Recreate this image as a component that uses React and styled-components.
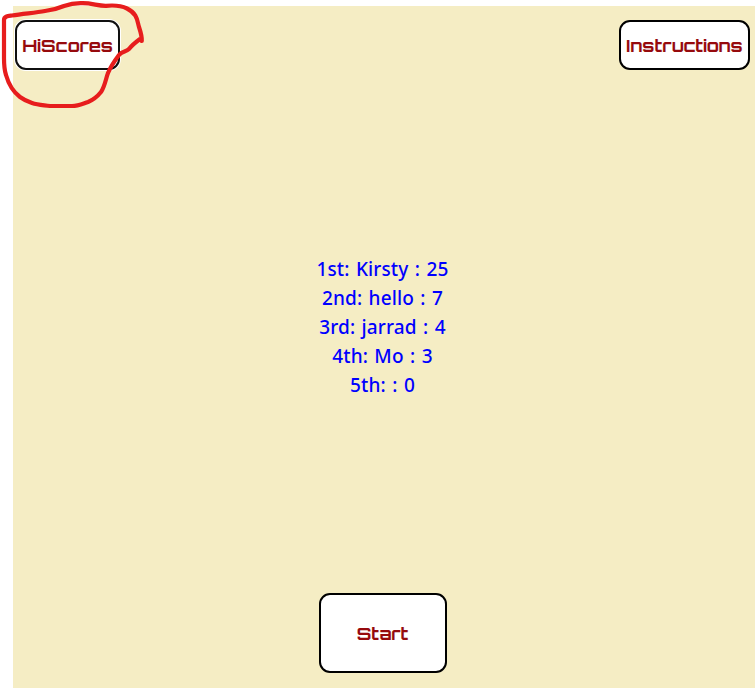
import React from "react";
import styled, { createGlobalStyle } from "styled-components";

const GlobalStyle = createGlobalStyle`
  * { box-sizing: border-box; }
  body { margin: 0; background: #fff; overflow: hidden; }
`;

const Page = styled.div`
  position: relative;
  height: 688px;
  padding: 6px 0 0 13px;
`;

const Game = styled.main`
  height: 682px;
  background: #f5edc4;
  padding: 14px 5px 15px 2px;
  display: flex;
  flex-direction: column;
  align-items: center;
`;

const TopBar = styled.header`
  align-self: stretch;
  display: flex;
  justify-content: space-between;
`;

const GameButton = styled.button`
  width: ${(p) => p.$width}px;
  height: ${(p) => p.$height}px;
  padding: 0;
  display: flex;
  align-items: center;
  justify-content: center;
  background: #fff;
  border: 2px solid ${(p) => (p.$active ? "#101010" : "#000")};
  border-radius: 11px;
  box-shadow: ${(p) => (p.$active ? "0 0 0 1px #fff" : "none")};
  color: #960a0d;
  font: 700 17.6px "Orbitron", "DejaVu Sans", sans-serif;
  -webkit-text-stroke: 0.1px #960a0d;
  white-space: nowrap;
`;

const Scores = styled.ol`
  list-style: none;
  margin: 185px 0 193px;
  padding: 0;
  text-align: center;
`;

const Score = styled.li`
  height: 29px;
  color: #0000ff;
  font: 500 19px/29px "Noto Sans", sans-serif;
  letter-spacing: 0.13px;
  word-spacing: 1.3px;
  white-space: nowrap;
`;

const Marker = styled.svg`
  position: absolute;
  left: 0;
  top: 0;
  pointer-events: none;
`;

const scores = [
  "1st: Kirsty : 25",
  "2nd: hello : 7",
  "3rd: jarrad : 4",
  "4th: Mo : 3",
  "5th: : 0",
];

export default function App() {
  return (
    <Page>
      <GlobalStyle />
      <Game>
        <TopBar>
          <GameButton $width={105} $height={50} $active>HiScores</GameButton>
          <GameButton $width={131} $height={50}>Instructions</GameButton>
        </TopBar>
        <Scores>
          {scores.map((s) => (
            <Score key={s}>{s}</Score>
          ))}
        </Scores>
        <GameButton $width={128} $height={80}>Start</GameButton>
      </Game>
      <Marker width="150" height="112" viewBox="0 0 150 112" fill="none">
        <path
          d="M119 55C113 63 111 66 108 73C106 78 105 86 101 92C97 97 93 100 88 102C82 104 78 106 72 106L50 106C43 105 38 105 32 103C26 101 24 100 20 97C12 91 8 82 6 75C4 69 4 64 4 58L4 20C4 16 8 16 12 15.500C23 13.500 35 13 45 11C53 10 57 9 64 6C71 3.500 75 3 82 3.200C92 3 98 6 106 5.800C114 5 122 6 127 8.500C138 14 137 21 139 27C141 33 142 37 141.800 41L140 39C136 42 132 45 129 49C126 52 122 51 119 55Z"
          stroke="#e71d1d"
          strokeWidth="4.2"
          strokeLinecap="round"
          strokeLinejoin="round"
        />
      </Marker>
    </Page>
  );
}
